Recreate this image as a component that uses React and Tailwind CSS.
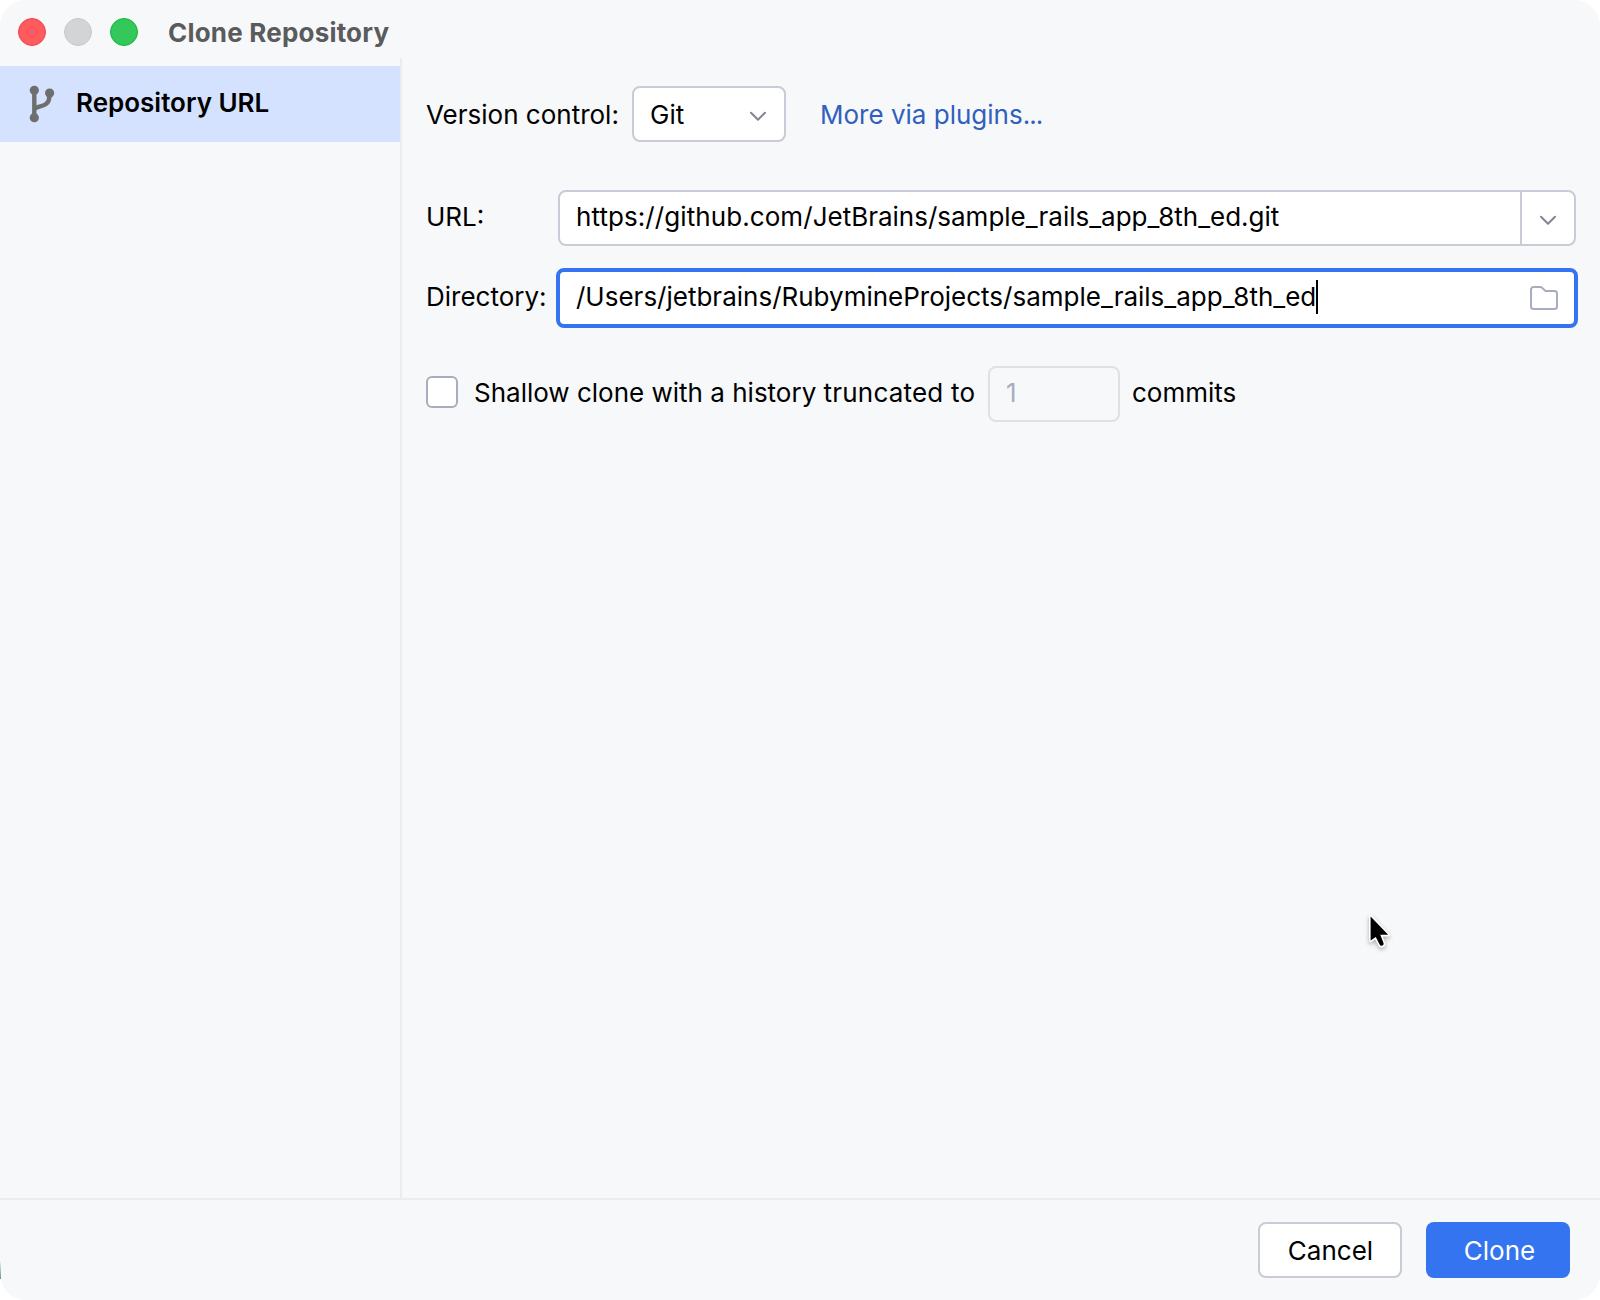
import React, { useState } from 'react';

const ChevronDown = () => (
  <svg width="18" height="11" viewBox="0 0 18 11" fill="none" stroke="#818594" strokeWidth="2" strokeLinecap="round" strokeLinejoin="round">
    <path d="M2 1.7 L9 8.7 L16 1.7" />
  </svg>
);

const BranchIcon = () => (
  <svg width="26" height="38" viewBox="0 0 26 38" fill="none">
    <path d="M5.3 5.3V33M20.4 8V11.5C20.4 19.5 14 20.6 9.5 21.8C7.5 22.4 6 23.2 5.3 24.5" stroke="#6e6e6e" strokeWidth="4.4" />
    <circle cx="5.3" cy="5.3" r="4.6" fill="#6e6e6e" />
    <circle cx="5.3" cy="32.7" r="4.6" fill="#6e6e6e" />
    <circle cx="20.6" cy="8" r="4.6" fill="#6e6e6e" />
  </svg>
);

const FolderIcon = () => (
  <svg width="28" height="24" viewBox="0 0 28 24" fill="none" stroke="#a8adbd" strokeWidth="2" strokeLinejoin="round">
    <path d="M1 3.5A2.5 2.5 0 0 1 3.5 1H10.2A2.5 2.5 0 0 1 11.8 1.6L15.5 5H24.5A2.5 2.5 0 0 1 27 7.5V20.5A2.5 2.5 0 0 1 24.5 23H3.5A2.5 2.5 0 0 1 1 20.5Z" />
  </svg>
);

const Pointer = () => (
  <svg className="absolute left-[1366px] top-[912px] drop-shadow-[0_2px_2px_rgba(0,0,0,0.3)]" width="28" height="40" viewBox="0 0 28 40">
    <path d="M4.6 4.4V28.6L9.8 24.9L13.6 32.6C14.8 35 18.4 33.6 17.5 31.1L14.3 22.8H22.2Z" fill="#000" stroke="#fff" strokeWidth="3.2" strokeLinejoin="round" paintOrder="stroke" />
  </svg>
);

const TitleBar = () => (
  <header className="flex h-[58px] shrink-0 items-center pl-[18px]">
    <div className="flex gap-[18px] pt-1.5">
      <span className="size-7 rounded-full border border-[#f5424a] bg-[#ff5b5f]"></span>
      <span className="size-7 rounded-full border border-[#c8c9cb] bg-[#d2d4d6]"></span>
      <span className="size-7 rounded-full border border-[#10b93c] bg-[#34c759]"></span>
    </div>
    <h1 className="ml-[30px] pt-2 font-bold tracking-[0.2px] text-[#5a5b5d]">Clone Repository</h1>
  </header>
);

const Sidebar = () => (
  <aside className="w-[402px] shrink-0 border-r-2 border-[#ebecf0] pt-2">
    <div className="flex h-[76px] items-center bg-[#d4e2ff] pl-[29px]">
      <BranchIcon />
      <span className="ml-[21px] pb-0.5 font-semibold">Repository URL</span>
    </div>
  </aside>
);

const CloneForm = () => {
  const [shallow, setShallow] = useState(false);

  return (
    <main className="flex-1 pl-6 pr-[22px] pt-7">
      <div className="flex h-14 items-center">
        <span className="w-[206px] pt-0.5">Version control:</span>
        <button className="flex h-14 w-[154px] items-center justify-between rounded-lg border-2 border-[#c9ccd6] bg-white pl-4 pr-[17px]">
          <span className="pt-0.5">Git</span>
          <span className="pt-1"><ChevronDown /></span>
        </button>
        <a className="ml-[34px] pt-0.5 text-[#315fbd]">More via plugins<span className="tracking-[-1px]">...</span></a>
      </div>

      <div className="mt-12 flex h-14 items-center pr-0.5">
        <span className="w-[132px] pb-0.5">URL:</span>
        <div className="flex h-14 flex-1 rounded-lg border-2 border-[#c9ccd6] bg-white">
          <div className="flex-1 pl-4 pt-[9px]">
            <span className="tracking-[0.08px]">https://github.com/</span>JetBrains/sample_rails_app_8th_ed.git
          </div>
          <button className="flex w-[54px] items-center justify-center border-l-2 border-[#c9ccd6] pt-1">
            <ChevronDown />
          </button>
        </div>
      </div>

      <div className="mt-[22px] flex h-[60px] items-center">
        <span className="w-[130px] pb-0.5">Directory:</span>
        <div className="flex h-[60px] flex-1 items-center rounded-lg border-4 border-[#3574f0] bg-white pl-4 pr-4">
          <span className="pb-0.5">/Users/jetbrains/RubymineProjects/sample_rails_app_8th_ed</span>
          <span className="mb-0.5 h-[34px] w-0.5 bg-black"></span>
          <span className="ml-auto"><FolderIcon /></span>
        </div>
      </div>

      <div className="mt-[38px] flex h-14 items-center">
        <button
          onClick={() => setShallow(!shallow)}
          className="mb-1 size-8 shrink-0 rounded-md border-2 border-[#a8adbd] bg-white"
        ></button>
        <span className="w-[530px] pb-0.5 pl-4">
          Shallow clone with a history <span className="tracking-[0.2px]">truncated to</span>
        </span>
        <div className="flex h-14 w-[132px] items-center rounded-lg border-2 border-[#dfe1e5] pb-0.5 pl-4 text-[#a8adbd]">1</div>
        <span className="ml-3 pb-0.5">commits</span>
      </div>
    </main>
  );
};

const Footer = () => (
  <footer className="flex h-[102px] shrink-0 justify-end gap-6 border-t-2 border-[#ebecf0] pr-[30px] pt-[22px]">
    <button className="h-14 w-36 rounded-lg border-2 border-[#c9ccd6] bg-white pl-px pt-0.5">Cancel</button>
    <button className="h-14 w-36 rounded-lg bg-[#3574f0] pl-[3px] pt-0.5 text-white">Clone</button>
  </footer>
);

export default function App() {
  return (
    <div className="relative h-[1300px] w-[1600px] overflow-hidden bg-white">
      <div className="flex h-full flex-col rounded-[26px] bg-[#f7f8fa] font-['Inter',sans-serif] text-[26px] leading-8 text-black">
        <TitleBar />
        <div className="flex flex-1">
          <Sidebar />
          <CloneForm />
        </div>
        <Footer />
      </div>
      <span className="absolute left-0 top-[1262px] h-[17px] w-px bg-linear-to-b from-[#e6efea] to-[#5aa37c]"></span>
      <Pointer />
    </div>
  );
}
